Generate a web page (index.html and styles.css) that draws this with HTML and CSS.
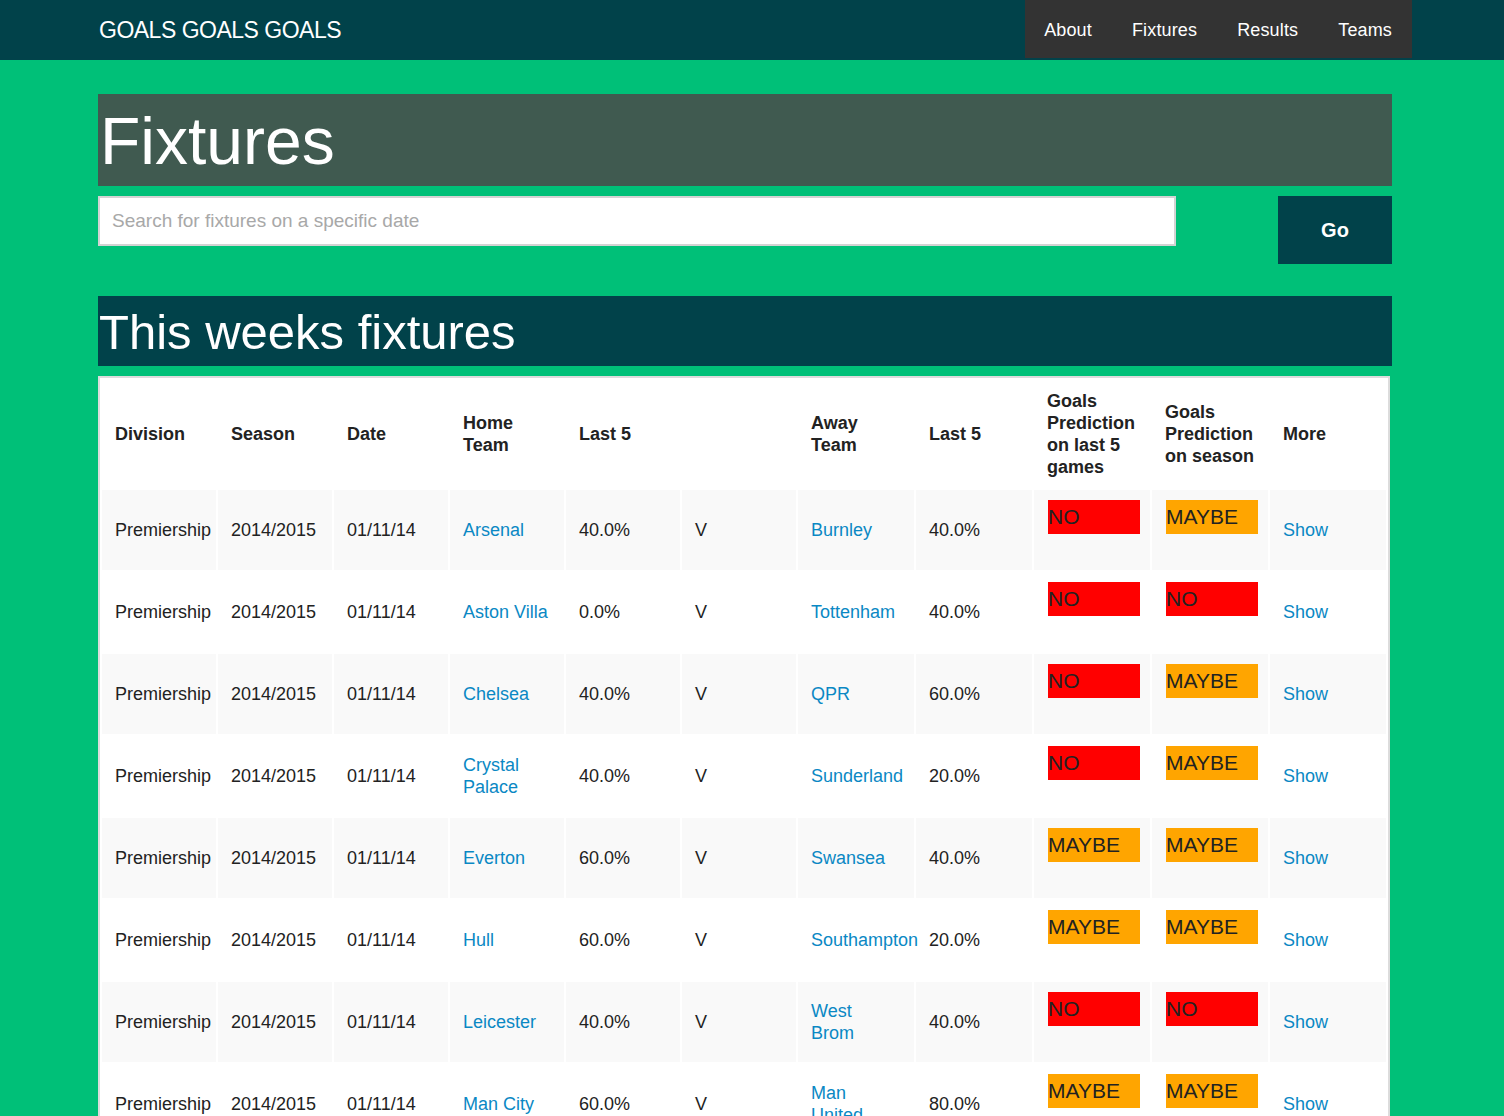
FILE: index.html
```html
<!DOCTYPE html>
<html lang="en">
<head>
<meta charset="utf-8">
<title>Fixtures - GOALS GOALS GOALS</title>
<link rel="stylesheet" href="styles.css">
</head>
<body>
<header class="navbar">
  <div class="navbar-inner">
    <a class="brand" href="#">GOALS GOALS GOALS</a>
    <ul class="nav">
      <li><a href="#">About</a></li>
      <li><a href="#">Fixtures</a></li>
      <li><a href="#">Results</a></li>
      <li><a href="#">Teams</a></li>
    </ul>
  </div>
</header>
<main class="container">
  <div class="page-title"><h1>Fixtures</h1></div>
  <form class="search">
    <input class="search-input" type="text" placeholder="Search for fixtures on a specific date">
    <button class="go-btn" type="button">Go</button>
  </form>
  <h2 class="section-title">This weeks fixtures</h2>
  <table class="fixtures">
    <colgroup>
      <col class="c114"><col class="c114"><col class="c114"><col class="c114"><col class="c114"><col class="c114">
      <col class="c116"><col class="c116"><col class="c116"><col class="c116"><col class="c116">
    </colgroup>
    <thead>
      <tr>
        <th>Division</th><th>Season</th><th>Date</th><th>Home Team</th><th>Last 5</th><th></th>
        <th>Away Team</th><th>Last 5</th><th>Goals Prediction on last 5 games</th><th>Goals Prediction on season</th><th>More</th>
      </tr>
    </thead>
    <tbody>
      <tr>
        <td>Premiership</td><td>2014/2015</td><td>01/11/14</td><td><a href="#">Arsenal</a></td><td>40.0%</td><td>V</td>
        <td class="away"><a href="#">Burnley</a></td><td>40.0%</td>
        <td class="pred"><div class="badge no">NO</div></td><td class="pred"><div class="badge maybe">MAYBE</div></td><td><a href="#">Show</a></td>
      </tr>
      <tr>
        <td>Premiership</td><td>2014/2015</td><td>01/11/14</td><td><a href="#">Aston Villa</a></td><td>0.0%</td><td>V</td>
        <td class="away"><a href="#">Tottenham</a></td><td>40.0%</td>
        <td class="pred"><div class="badge no">NO</div></td><td class="pred"><div class="badge no">NO</div></td><td><a href="#">Show</a></td>
      </tr>
      <tr>
        <td>Premiership</td><td>2014/2015</td><td>01/11/14</td><td><a href="#">Chelsea</a></td><td>40.0%</td><td>V</td>
        <td class="away"><a href="#">QPR</a></td><td>60.0%</td>
        <td class="pred"><div class="badge no">NO</div></td><td class="pred"><div class="badge maybe">MAYBE</div></td><td><a href="#">Show</a></td>
      </tr>
      <tr>
        <td>Premiership</td><td>2014/2015</td><td>01/11/14</td><td><a href="#">Crystal Palace</a></td><td>40.0%</td><td>V</td>
        <td class="away"><a href="#">Sunderland</a></td><td>20.0%</td>
        <td class="pred"><div class="badge no">NO</div></td><td class="pred"><div class="badge maybe">MAYBE</div></td><td><a href="#">Show</a></td>
      </tr>
      <tr>
        <td>Premiership</td><td>2014/2015</td><td>01/11/14</td><td><a href="#">Everton</a></td><td>60.0%</td><td>V</td>
        <td class="away"><a href="#">Swansea</a></td><td>40.0%</td>
        <td class="pred"><div class="badge maybe">MAYBE</div></td><td class="pred"><div class="badge maybe">MAYBE</div></td><td><a href="#">Show</a></td>
      </tr>
      <tr>
        <td>Premiership</td><td>2014/2015</td><td>01/11/14</td><td><a href="#">Hull</a></td><td>60.0%</td><td>V</td>
        <td class="away"><a href="#">Southampton</a></td><td>20.0%</td>
        <td class="pred"><div class="badge maybe">MAYBE</div></td><td class="pred"><div class="badge maybe">MAYBE</div></td><td><a href="#">Show</a></td>
      </tr>
      <tr>
        <td>Premiership</td><td>2014/2015</td><td>01/11/14</td><td><a href="#">Leicester</a></td><td>40.0%</td><td>V</td>
        <td class="away"><a href="#">West Brom</a></td><td>40.0%</td>
        <td class="pred"><div class="badge no">NO</div></td><td class="pred"><div class="badge no">NO</div></td><td><a href="#">Show</a></td>
      </tr>
      <tr>
        <td>Premiership</td><td>2014/2015</td><td>01/11/14</td><td><a href="#">Man City</a></td><td>60.0%</td><td>V</td>
        <td class="away"><a href="#">Man United</a></td><td>80.0%</td>
        <td class="pred"><div class="badge maybe">MAYBE</div></td><td class="pred"><div class="badge maybe">MAYBE</div></td><td><a href="#">Show</a></td>
      </tr>
      <tr>
        <td>Premiership</td><td>2014/2015</td><td>01/11/14</td><td><a href="#">Newcastle</a></td><td>40.0%</td><td>V</td>
        <td class="away"><a href="#">Liverpool</a></td><td>40.0%</td>
        <td class="pred"><div class="badge no">NO</div></td><td class="pred"><div class="badge maybe">MAYBE</div></td><td><a href="#">Show</a></td>
      </tr>
    </tbody>
  </table>
</main>
</body>
</html>
```
FILE: styles.css
```css
* {
  box-sizing: border-box;
}

html, body {
  margin: 0;
  padding: 0;
}

body {
  background: #00c078;
  font-family: "Liberation Sans", Arial, Helvetica, sans-serif;
  font-size: 18px;
  line-height: 22px;
  color: #333;
}

a {
  color: #0a88c4;
  text-decoration: none;
}

/* Navbar */
.navbar {
  background: #01424a;
  height: 60px;
}

.navbar-inner {
  display: flex;
  justify-content: space-between;
  align-items: flex-start;
  margin-left: 99px;
  width: 1313px;
}

.brand {
  color: #fff;
  font-size: 23px;
  letter-spacing: -0.5px;
  line-height: 60px;
}

.nav {
  display: flex;
  margin: 0;
  padding: 0;
  list-style: none;
  background: #333;
  height: 58px;
}

.nav a {
  display: block;
  padding: 0 20px;
  color: #fff;
  font-size: 18px;
  letter-spacing: 0.15px;
  line-height: 60px;
  height: 58px;
}

.nav li:first-child a {
  padding-left: 19px;
}

/* Container */
.container {
  width: 1294px;
  margin-left: 98px;
  padding-top: 34px;
}

.page-title {
  background: #405a50;
  height: 92px;
}

.page-title h1 {
  margin: 0;
  padding: 2px 0 0 2px;
  font-size: 66px;
  font-weight: normal;
  line-height: 90px;
  color: #fff;
}

.search {
  display: flex;
  justify-content: space-between;
  align-items: flex-start;
  margin-top: 10px;
}

.search-input {
  width: 1078px;
  height: 50px;
  border: 2px solid #d3d3d3;
  background: #fff;
  padding: 0 12px;
  font-family: "Liberation Sans", Arial, sans-serif;
  font-size: 19px;
  color: #333;
  outline: none;
}

.search-input::placeholder {
  color: #a8a8a8;
}

.go-btn {
  width: 114px;
  height: 68px;
  border: 0;
  background: #01424a;
  color: #fff;
  font-family: "Liberation Sans", Arial, sans-serif;
  font-size: 20px;
  font-weight: bold;
  padding: 0;
}

.section-title {
  margin: 32px 0 0;
  background: #01424a;
  height: 70px;
  padding: 0 0 0 1px;
  color: #fff;
  font-size: 49px;
  font-weight: normal;
  line-height: 72px;
}

/* Table */
.fixtures {
  margin-top: 10px;
  width: 1292px;
  table-layout: fixed;
  border-collapse: separate;
  border-spacing: 2px;
  border: 2px solid #dcdcdc;
  border-bottom: 0;
  background: #fff;
}

.c114 {
  width: 114px;
}

.c116 {
  width: 116px;
}

.fixtures th {
  text-align: left;
  font-weight: bold;
  color: #222;
  padding: 10px 8px 10px 13px;
  height: 108px;
  vertical-align: middle;
  line-height: 22px;
}

.fixtures td {
  height: 80px;
  padding: 0 10px 0 13px;
  vertical-align: middle;
  color: #222;
}

.fixtures td.away {
  padding-right: 20px;
}

.fixtures tbody tr:nth-child(odd) td {
  background: #f9f9f9;
}

.fixtures td.pred {
  vertical-align: top;
  padding: 10px 0 0 14px;
}

.badge {
  width: 92px;
  height: 34px;
  padding-top: 5px;
  font-size: 21px;
  line-height: 24px;
  color: #222;
}

.badge.no {
  background: #ff0000;
}

.badge.maybe {
  background: #ffa500;
}
```
